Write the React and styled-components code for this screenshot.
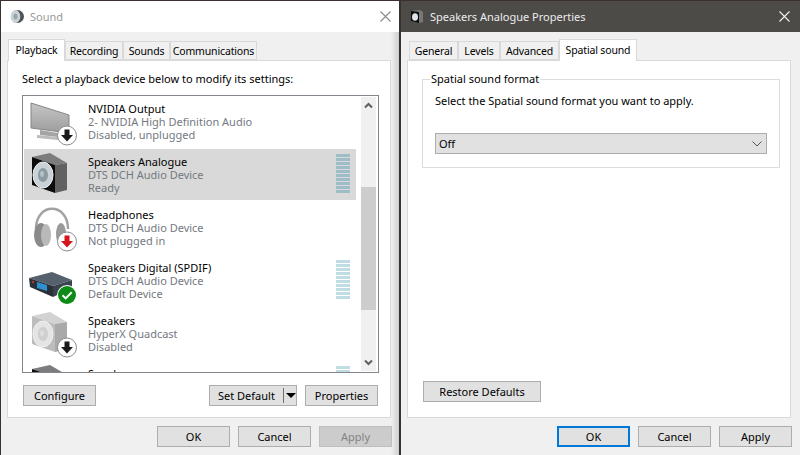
import React from "react"
import styled, { createGlobalStyle } from "styled-components"

const GlobalStyle = createGlobalStyle`
  html, body {
    margin: 0;
    padding: 0;
    background: #3a302e;
  }
  * {
    box-sizing: border-box;
  }
`

const devices = [
  { name: "NVIDIA Output", sub: "2- NVIDIA High Definition Audio", state: "Disabled, unplugged", icon: "monitor" },
  { name: "Speakers Analogue", sub: "DTS DCH Audio Device", state: "Ready", icon: "speaker", selected: true, meter: true },
  { name: "Headphones", sub: "DTS DCH Audio Device", state: "Not plugged in", icon: "headphones" },
  { name: "Speakers Digital (SPDIF)", sub: "DTS DCH Audio Device", state: "Default Device", icon: "receiver", meter: true },
  { name: "Speakers", sub: "HyperX Quadcast", state: "Disabled", icon: "speakerOff" },
  { name: "Speakers", icon: "speaker", meter: true },
]

function Badge({ kind }) {
  if (kind === "ok") {
    return (
      <g>
        <circle cx="39" cy="40" r="10" fill="#fff" />
        <circle cx="39" cy="40" r="9" fill="#0e8a16" />
        <path d="M34.5 40.2l3.2 3.2 6-6.2" fill="none" stroke="#fff" strokeWidth="2" />
      </g>
    )
  }
  const color = kind === "red" ? "#d5141c" : "#1a1a1a"
  return (
    <g>
      <circle cx="39" cy="39.5" r="9.5" fill="#fff" stroke="#8c8c8c" />
      <path d="M36.5 33.5h5v5.5h3.5l-6 6.5-6-6.5h3.5z" fill={color} />
    </g>
  )
}

function SpeakerBox({ off }) {
  return (
    <g>
      <polygon points="4,8 22,4 39,14 27,16" fill={off ? "#d2d2d2" : "#7c7c7c"} />
      <polygon points="27,16 39,14 39,41 27,44" fill={off ? "#a9a9a9" : "#616161"} />
      <polygon points="4,8 27,16 27,44 4,36" fill={off ? "#bdbdbd" : "#0c0c0c"} />
      <ellipse cx="15" cy="26" rx="10" ry="13" fill={off ? "#e4e4e4" : "#c9d2d6"} stroke={off ? "#f0f0f0" : "#eef1f2"} />
      <ellipse cx="15" cy="26" rx="5" ry="7" fill={off ? "#cfcfcf" : "#8d9ba2"} />
      <ellipse cx="14" cy="25" rx="2" ry="3" fill={off ? "#dedede" : "#b4c0c6"} />
    </g>
  )
}

function DeviceIcon({ icon }) {
  return (
    <IconSvg viewBox="0 0 50 50">
      {icon === "monitor" && (
        <g>
          <defs>
            <linearGradient id="screenFill" x1="0" y1="0" x2="0" y2="1">
              <stop offset="0" stopColor="#c6c6c6" />
              <stop offset="1" stopColor="#9c9c9c" />
            </linearGradient>
          </defs>
          <polygon points="3,7 41,19 41,37 3,32" fill="url(#screenFill)" stroke="#858585" />
          <polygon points="12,34 30,37 30,41 12,39" fill="#a4a4a4" />
          <polygon points="9,39 30,41 30,44 9,42" fill="#bcbcbc" />
          <Badge kind="down" />
        </g>
      )}
      {icon === "speaker" && <SpeakerBox />}
      {icon === "speakerOff" && (
        <g>
          <SpeakerBox off />
          <Badge kind="down" />
        </g>
      )}
      {icon === "headphones" && (
        <g>
          <path d="M8 27C8 0 40 0 40 27" fill="none" stroke="#a3a3a3" strokeWidth="2.5" />
          <ellipse cx="13" cy="33" rx="7" ry="12" fill="#8a8a8a" />
          <ellipse cx="18" cy="33" rx="5" ry="11" fill="#b9b9b9" />
          <ellipse cx="33" cy="32" rx="5" ry="11" fill="#9b9b9b" />
          <Badge kind="red" />
        </g>
      )}
      {icon === "receiver" && (
        <g>
          <polygon points="1,23 24,17 44,25 25,31" fill="#55616d" />
          <polygon points="1,23 25,31 25,42 2,32" fill="#2a3038" />
          <polygon points="25,31 44,25 44,33 25,42" fill="#3a434d" />
          <polygon points="9,27 19,30 19,36 9,33" fill="#2f8fd0" />
          <circle cx="5" cy="27" r="1.2" fill="#b23a3a" />
          <Badge kind="ok" />
        </g>
      )}
    </IconSvg>
  )
}

function Meter() {
  return (
    <MeterColumn>
      {Array.from({ length: 10 }, (_, i) => (
        <MeterBar key={i} />
      ))}
    </MeterColumn>
  )
}

function DeviceRow({ device }) {
  return (
    <Row $selected={device.selected}>
      <DeviceIcon icon={device.icon} />
      <RowText>
        <RowName>{device.name}</RowName>
        {device.sub && <RowSub>{device.sub}</RowSub>}
        {device.state && <RowSub>{device.state}</RowSub>}
      </RowText>
      {device.meter && <Meter />}
    </Row>
  )
}

function CloseIcon({ color }) {
  return (
    <svg width="11" height="11" viewBox="0 0 11 11">
      <path d="M0.5 0.5l10 10M10.5 0.5l-10 10" stroke={color} strokeWidth="1.1" fill="none" />
    </svg>
  )
}

function Chevron({ up }) {
  return (
    <svg width="9" height="7" viewBox="0 0 9 7">
      <path d={up ? "M1 5.5l3.5-3.5 3.5 3.5" : "M1 1.5l3.5 3.5 3.5-3.5"} stroke="#606060" strokeWidth="2" fill="none" />
    </svg>
  )
}

function Footer({ applyDisabled, focusOk }) {
  return (
    <FooterRow>
      <Button $focused={focusOk}>OK</Button>
      <Button>Cancel</Button>
      <Button $disabled={applyDisabled}>Apply</Button>
    </FooterRow>
  )
}

function SoundWindow() {
  return (
    <LeftWindow>
      <TitleBar>
        <svg width="14" height="15" viewBox="0 0 14 15">
          <circle cx="7.5" cy="7.5" r="6.5" fill="#4f5253" />
          <ellipse cx="5.5" cy="7.5" rx="4.8" ry="6.4" fill="#c9d2d6" />
          <ellipse cx="5.5" cy="7.5" rx="2" ry="3" fill="#97a4aa" />
        </svg>
        <TitleText>Sound</TitleText>
        <CloseIcon color="#8a8a8a" />
      </TitleBar>
      <Body $shaded>
        <TabStrip $indent={1}>
          <Tab $w={57} $active>Playback</Tab>
          <Tab $w={58}>Recording</Tab>
          <Tab $w={47}>Sounds</Tab>
          <Tab $w={87}>Communications</Tab>
        </TabStrip>
        <Panel>
          <PanelLabel>Select a playback device below to modify its settings:</PanelLabel>
          <ListBox>
            <Rows>
              {devices.map((d, i) => (
                <DeviceRow key={i} device={d} />
              ))}
            </Rows>
            <Scrollbar>
              <ScrollButton><Chevron up /></ScrollButton>
              <ScrollThumb />
              <ScrollButton><Chevron /></ScrollButton>
            </Scrollbar>
          </ListBox>
          <ListActions>
            <Button>Configure</Button>
            <SplitButton>
              <SplitLabel>Set Default</SplitLabel>
              <SplitDivider />
              <SplitArrow />
            </SplitButton>
            <Button>Properties</Button>
          </ListActions>
        </Panel>
        <Footer applyDisabled />
      </Body>
    </LeftWindow>
  )
}

function PropertiesWindow() {
  return (
    <RightWindow>
      <TitleBar $dark>
        <svg width="14" height="15" viewBox="0 0 14 15">
          <polygon points="1,2 10,1 13,3 13,13 9,14 1,12" fill="#777" />
          <polygon points="1,2 9,3 9,14 1,12" fill="#0c0c0c" />
          <ellipse cx="5" cy="8" rx="3" ry="3.8" fill="#dfe5e8" />
        </svg>
        <TitleText $dark>Speakers Analogue Properties</TitleText>
        <CloseIcon color="#f2f2f2" />
      </TitleBar>
      <Body>
        <TabStrip $indent={2}>
          <Tab $w={49}>General</Tab>
          <Tab $w={42}>Levels</Tab>
          <Tab $w={59}>Advanced</Tab>
          <Tab $w={78} $active>Spatial sound</Tab>
        </TabStrip>
        <Panel>
          <GroupBox>
            <GroupLegend>Spatial sound format</GroupLegend>
            <GroupText>Select the Spatial sound format you want to apply.</GroupText>
            <Combo>
              <span>Off</span>
              <svg width="10" height="6" viewBox="0 0 10 6">
                <path d="M0.5 0.5l4.5 4.5 4.5-4.5" stroke="#555" fill="none" />
              </svg>
            </Combo>
          </GroupBox>
          <RestoreRow>
            <Button $w={118}>Restore Defaults</Button>
          </RestoreRow>
        </Panel>
        <Footer focusOk />
      </Body>
    </RightWindow>
  )
}

export default function App() {
  return (
    <Desktop>
      <GlobalStyle />
      <SoundWindow />
      <PropertiesWindow />
    </Desktop>
  )
}

const Desktop = styled.div`
  display: flex;
  width: 800px;
  height: 455px;
  padding: 1px 0 0 1px;
  gap: 2px;
  overflow: hidden;
  background: #3a302e;
  font-family: "Noto Sans", sans-serif;
  font-size: 11px;
  color: #000;
`

const LeftWindow = styled.section`
  display: flex;
  flex-direction: column;
  width: 398px;
  flex: none;
  background: #f0f0f0;
`

const RightWindow = styled(LeftWindow)`
  width: 399px;
`

const TitleBar = styled.header`
  display: flex;
  align-items: center;
  height: 31px;
  flex: none;
  padding: 0 ${(p) => (p.$dark ? "10px" : "8px")} 0 9px;
  background: ${(p) => (p.$dark ? "#4d4b48" : "#fff")};
`

const TitleText = styled.span`
  flex: 1;
  margin-left: 6px;
  font-size: 11px;
  color: ${(p) => (p.$dark ? "#ececec" : "#999")};
`

const Body = styled.div`
  display: flex;
  flex-direction: column;
  flex: 1;
  padding-left: 6px;
  background: ${(p) =>
    p.$shaded
      ? "linear-gradient(to right, #f0f0f0 calc(100% - 8px), #cfcfcf 100%)"
      : "#f0f0f0"};
`

const TabStrip = styled.div`
  display: flex;
  align-items: flex-end;
  height: 28px;
  padding-left: ${(p) => p.$indent}px;
`

const Tab = styled.div`
  display: flex;
  align-items: center;
  justify-content: center;
  position: relative;
  width: ${(p) => p.$w}px;
  height: ${(p) => (p.$active ? "22px" : "19px")};
  margin-bottom: ${(p) => (p.$active ? "-1px" : "0")};
  padding-bottom: ${(p) => (p.$active ? "2px" : "0")};
  background: ${(p) => (p.$active ? "#fff" : "#f0f0f0")};
  border: 1px solid #d9d9d9;
  border-bottom: ${(p) => (p.$active ? "none" : "1px solid #d9d9d9")};
  font-size: 10.5px;
  letter-spacing: -0.15px;
  white-space: nowrap;
  z-index: ${(p) => (p.$active ? 1 : 0)};
`

const Panel = styled.div`
  display: flex;
  flex-direction: column;
  width: 384px;
  height: 358px;
  flex: none;
  padding: 10px 0 15px 14px;
  background: #fff;
  border: 1px solid #d9d9d9;
`

const PanelLabel = styled.div`
  height: 16px;
  line-height: 16px;
  white-space: nowrap;
`

const ListBox = styled.div`
  display: flex;
  width: 357px;
  height: 278px;
  margin-top: 8px;
  flex: none;
  background: #fff;
  border: 1px solid #82878d;
`

const Rows = styled.div`
  display: flex;
  flex-direction: column;
  width: 338px;
  overflow: hidden;
`

const Row = styled.div`
  display: flex;
  align-items: flex-start;
  width: 332px;
  height: 51px;
  margin: 0 0 2px 1px;
  flex: none;
  padding-left: 4px;
  background: ${(p) => (p.$selected ? "#d9d9d9" : "transparent")};
  --meter: ${(p) => (p.$selected ? "#9fbdc6" : "#bfdde3")};
`

const IconSvg = styled.svg`
  width: 50px;
  height: 50px;
  flex: none;
`

const RowText = styled.div`
  flex: 1;
  margin-left: 10px;
  padding-top: 6px;
`

const RowName = styled.div`
  height: 13px;
  line-height: 13px;
  white-space: nowrap;
`

const RowSub = styled(RowName)`
  color: #74797f;
`

const MeterColumn = styled.div`
  display: flex;
  flex-direction: column;
  gap: 1px;
  width: 14px;
  margin: 5px 6px 0 0;
`

const MeterBar = styled.div`
  height: 3px;
  background: var(--meter);
`

const Scrollbar = styled.div`
  display: flex;
  flex-direction: column;
  width: 15px;
  margin: 1px 0;
  flex: none;
  background: #f0f0f0;
`

const ScrollButton = styled.div`
  display: flex;
  align-items: center;
  justify-content: center;
  height: 17px;
  flex: none;
`

const ScrollThumb = styled.div`
  width: 100%;
  height: 123px;
  margin: 73px 0 44px;
  flex: none;
  background: #cdcdcd;
`

const Button = styled.div`
  display: flex;
  align-items: center;
  justify-content: center;
  width: ${(p) => p.$w || 73}px;
  height: 21px;
  flex: none;
  background: ${(p) => (p.$disabled ? "#cccccc" : "#e1e1e1")};
  border: ${(p) => (p.$focused ? "2px solid #0078d7" : `1px solid ${p.$disabled ? "#bfbfbf" : "#adadad"}`)};
  color: ${(p) => (p.$disabled ? "#838383" : "#000")};
`

const ListActions = styled.div`
  display: flex;
  align-items: center;
  gap: 8px;
  margin-top: 12px;
  padding-left: 1px;
  & > :first-child {
    margin-right: 105px;
  }
`

const SplitButton = styled(Button)`
  width: 88px;
  justify-content: flex-start;
  padding-left: 8px;
`

const SplitLabel = styled.span`
  width: 65px;
  white-space: nowrap;
`

const SplitDivider = styled.span`
  width: 1px;
  height: 15px;
  background: #707070;
`

const SplitArrow = styled.span`
  width: 0;
  height: 0;
  margin-left: 2px;
  border-left: 5px solid transparent;
  border-right: 5px solid transparent;
  border-top: 5px solid #000;
`

const FooterRow = styled.footer`
  display: flex;
  justify-content: flex-end;
  gap: 8px;
  width: 385px;
  padding-top: 8px;
`

const GroupBox = styled.fieldset`
  width: 357px;
  height: 97px;
  margin: 0;
  padding: 6px 12px 0;
  flex: none;
  border: 1px solid #dcdcdc;
`

const GroupLegend = styled.legend`
  height: 16px;
  line-height: 16px;
  margin-left: -5px;
  padding: 0 1px;
`

const GroupText = styled.div`
  height: 16px;
  line-height: 16px;
  white-space: nowrap;
`

const Combo = styled.div`
  display: flex;
  align-items: center;
  justify-content: space-between;
  width: 332px;
  height: 21px;
  margin-top: 24px;
  padding: 0 4px 0 3px;
  background: #e1e1e1;
  border: 1px solid #adadad;
`

const RestoreRow = styled.div`
  display: flex;
  margin-top: auto;
  padding-left: 1px;
`
